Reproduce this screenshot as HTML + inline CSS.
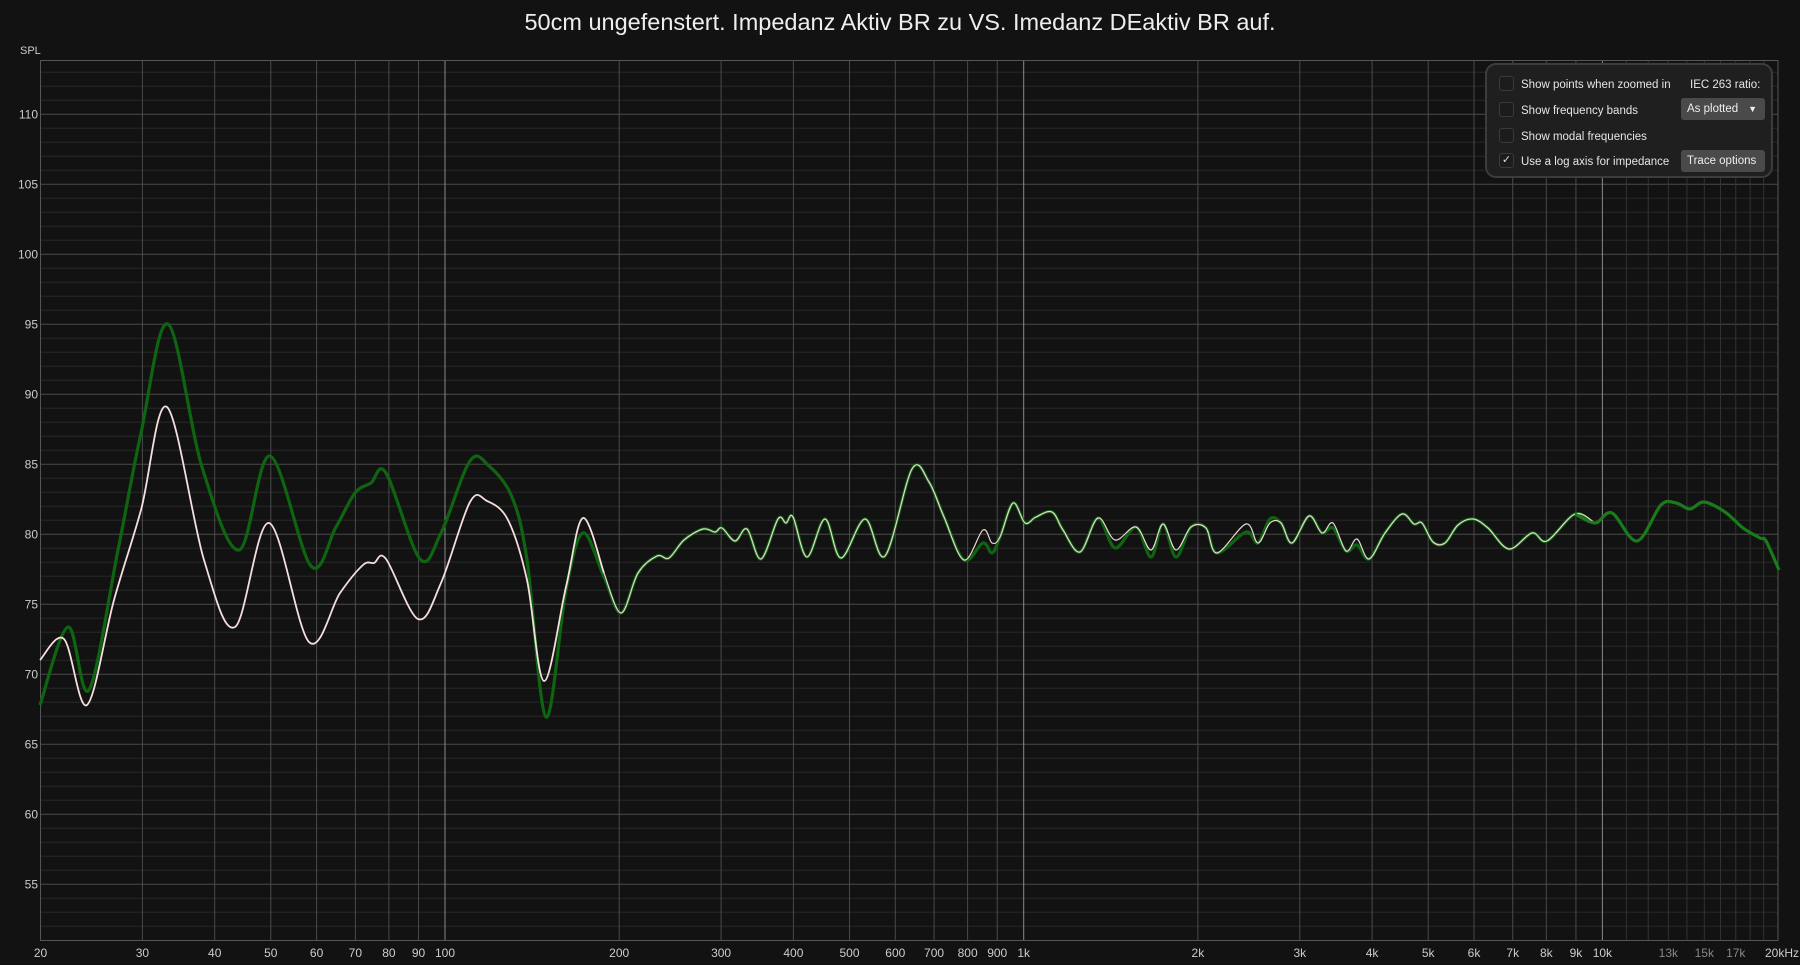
<!DOCTYPE html>
<html><head><meta charset="utf-8"><style>
html,body{margin:0;padding:0;background:#121212;width:1800px;height:965px;overflow:hidden;font-family:"Liberation Sans",sans-serif;}
svg{position:absolute;left:0;top:0}
.panel{position:absolute;left:1485px;top:63px;width:288px;height:115px;background:#1f1f1f;border:2px solid #3c3c3c;border-radius:11px;box-sizing:border-box;color:#e6e6e6;font-size:11.5px}
.row{position:absolute;left:12px;height:16px;line-height:16px;white-space:nowrap}
.cb{display:inline-block;width:13px;height:13px;border:1px solid #3a3a3a;border-radius:3px;background:#1c1c1c;vertical-align:middle;margin-right:7px;position:relative;top:-1px;font-size:11px;line-height:13px;text-align:center;color:#ddd}
.btn{position:absolute;left:194px;width:84px;height:22px;background:#4a4a4a;border-radius:3px;color:#eee;font-size:11.5px;line-height:22px;padding-left:6px;box-sizing:border-box}
</style></head><body>
<svg id="s" width="1800" height="965" xmlns="http://www.w3.org/2000/svg"></svg>
<div class="panel">
 <div class="row" style="top:12px"><span class="cb"></span>Show points when zoomed in</div>
 <div class="row" style="top:12px;left:203px">IEC 263 ratio:</div>
 <div class="row" style="top:38px"><span class="cb"></span>Show frequency bands</div>
 <div class="btn" style="top:33px">As plotted <span style="font-size:9px;position:absolute;right:8px">▼</span></div>
 <div class="row" style="top:64px"><span class="cb"></span>Show modal frequencies</div>
 <div class="row" style="top:89px"><span class="cb">✓</span>Use a log axis for impedance</div>
 <div class="btn" style="top:85px">Trace options</div>
</div>
<script>
const s=document.getElementById('s');
const L=40.5,R=1778,T=60.5,B=940.5;
const fx=f=>40.5+578.7*Math.log10(f/20);
const dy=d=>114.3+(110-d)*14;
let h='';
h+=`<text x="900" y="30" fill="#eee" font-size="23.5" text-anchor="middle" font-family="Liberation Sans,sans-serif">50cm ungefenstert. Impedanz Aktiv BR zu VS. Imedanz DEaktiv BR auf.</text>`;
h+=`<text x="20" y="54" fill="#ccc" font-size="11" font-family="Liberation Sans,sans-serif">SPL</text>`;
for(let d=52;d<=113;d++){const y=dy(d);const maj=d%5==0;
 h+=`<line x1="${L}" x2="${R}" y1="${y}" y2="${y}" stroke="${maj?'#4a4a4a':'#282828'}" stroke-width="1"/>`;
 if(maj&&d<=110)h+=`<text x="38" y="${y+4}" fill="#ccc" font-size="12" text-anchor="end" font-family="Liberation Sans,sans-serif">${d}</text>`;}
const fr=[[20,'20'],[30,'30'],[40,'40'],[50,'50'],[60,'60'],[70,'70'],[80,'80'],[90,'90'],[100,'100'],[200,'200'],[300,'300'],[400,'400'],[500,'500'],[600,'600'],[700,'700'],[800,'800'],[900,'900'],[1000,'1k'],[2000,'2k'],[3000,'3k'],[4000,'4k'],[5000,'5k'],[6000,'6k'],[7000,'7k'],[8000,'8k'],[9000,'9k'],[10000,'10k']];
for(const [f,t] of fr){const x=fx(f);const big=(f==100||f==1000||f==10000);
 h+=`<line x1="${x}" x2="${x}" y1="${T}" y2="${B}" stroke="${big?'#8a8a8a':'#4a4a4a'}" stroke-width="1"/>`;
 h+=`<text x="${x}" y="957" fill="#ccc" font-size="12" text-anchor="middle" font-family="Liberation Sans,sans-serif">${t}</text>`;}
for(let k=11;k<=19;k++){const x=fx(k*1000);h+=`<line x1="${x}" x2="${x}" y1="${T}" y2="${B}" stroke="#333" stroke-width="1"/>`;}
for(const k of [13,15,17]){h+=`<text x="${fx(k*1000)}" y="957" fill="#888" font-size="12" text-anchor="middle" font-family="Liberation Sans,sans-serif">${k}k</text>`;}
h+=`<text x="1782" y="957" fill="#ccc" font-size="12" text-anchor="middle" font-family="Liberation Sans,sans-serif">20kHz</text>`;
h+=`<rect x="${L}" y="${T}" width="${R-L}" height="${B-T}" fill="none" stroke="#555"/>`;
const common=[[600,567],[621,613],[638,573],[657,556],[669,558],[684,540],[703,529],[715,532],[722,528],[735,541],[747,529],[761,559],[778,519],[786,523],[793,517],[807,557],[825,519],[841,558],[865,519],[885,556],[912,469],[929,482],[944,517],[964,560]];
const gMid=[[983,543],[992,553],[1000,537],[1013,503],[1025,523],[1036,517],[1052,512],[1063,530],[1080,552],[1098,518],[1115,548],[1136,527],[1151,557],[1163,524],[1176,557],[1191,527],[1206,528],[1217,553],[1246,532],[1258,543],[1270,519],[1281,523],[1292,543],[1309,516],[1322,533],[1333,528],[1346,551],[1357,545],[1369,559]];
const pMid=[[983,530],[992,543],[1000,537],[1013,503],[1025,523],[1036,517],[1052,512],[1063,530],[1080,552],[1098,518],[1115,540],[1136,527],[1151,550],[1163,524],[1176,550],[1191,527],[1206,528],[1217,553],[1246,524],[1258,543],[1270,523],[1281,523],[1292,543],[1309,516],[1322,533],[1333,523],[1346,551],[1357,539],[1369,559]];
const tail=[[1385,533],[1402,514],[1414,524],[1422,523],[1433,542],[1445,543],[1458,525],[1473,519],[1488,528],[1509,549],[1532,533],[1547,541],[1575,514],[1595,523],[1612,513],[1637,541],[1661,505],[1676,503],[1690,509],[1704,502],[1725,512],[1743,528],[1760,538],[1766,541],[1779,570]];
const gLow=[[40,705],[68,627],[89,690],[118,550],[141,433],[168,324],[202,467],[239,550],[270,456],[311,566],[336,527],[355,493],[371,483],[386,473],[420,559],[441,533],[470,461],[489,466],[512,497],[527,560],[546,717],[566,590],[583,533],[604,577]];
const pLow=[[40,660],[64,639],[87,705],[114,600],[141,510],[167,407],[204,560],[235,627],[269,523],[309,642],[340,593],[363,565],[374,563],[386,559],[418,619],[441,583],[470,502],[487,501],[508,520],[527,580],[544,681],[566,587],[583,518],[604,573]];
const G=gLow.concat(common.slice(1),gMid,tail);
const P=pLow.concat(common.slice(1),pMid,tail.slice(0,14));
function cr(p){let d=`M${p[0][0]},${p[0][1]}`;for(let i=0;i<p.length-1;i++){const a=p[i-1]||p[i],b=p[i],c=p[i+1],e=p[i+2]||c;
 d+=`C${b[0]+(c[0]-a[0])/6},${b[1]+(c[1]-a[1])/6} ${c[0]-(e[0]-b[0])/6},${c[1]-(e[1]-b[1])/6} ${c[0]},${c[1]}`;}return d;}
h+=`<path d="${cr(G)}" fill="none" stroke="#0e6410" stroke-width="3.2" stroke-linejoin="round"/>`;
h+=`<path d="${cr(pLow)}" fill="none" stroke="#f6dede" stroke-width="1.8" stroke-linejoin="round"/>`;
h+=`<path d="${cr(P.slice(pLow.length-1))}" fill="none" stroke="#e8d8d0" stroke-width="1.2" stroke-linejoin="round"/>`;
h+=`<path d="${cr(tail.slice(12))}" fill="none" stroke="#1a7a1c" stroke-width="3"/>`;
s.innerHTML=h;
</script>
</body></html>
